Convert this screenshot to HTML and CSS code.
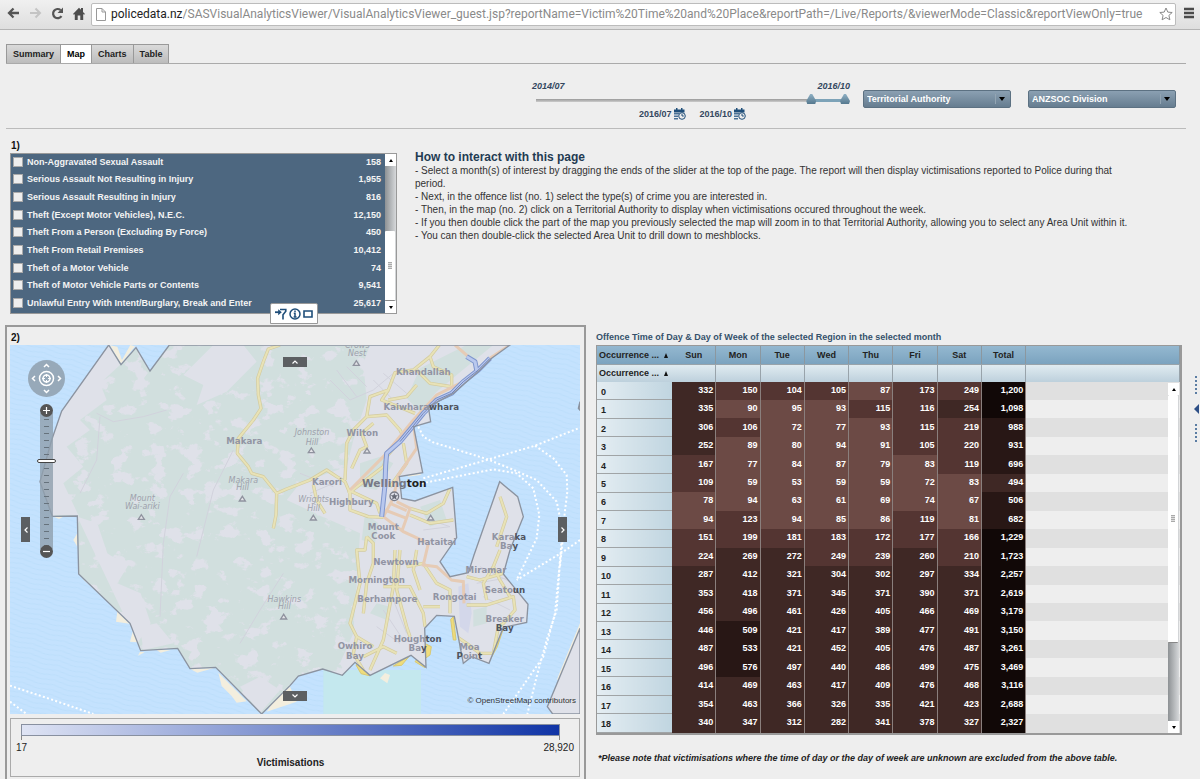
FILE: index.html
```html
<!DOCTYPE html>
<html lang="en">
<head>
<meta charset="utf-8">
<title>Victim Time and Place</title>
<link rel="stylesheet" href="styles.css">
</head>
<body>
<header class="browser">
  <nav class="browser-nav">
    <button class="icon-btn" aria-label="Back"><svg width="13" height="12" viewBox="0 0 13 12"><path d="M12 6H2M6.500 1.500L2 6l4.500 4.500" fill="none" stroke="#555" stroke-width="2.300"/></svg></button>
    <button class="icon-btn" aria-label="Forward"><svg width="13" height="12" viewBox="0 0 13 12"><path d="M1 6h10M6.500 1.500L11 6l-4.500 4.500" fill="none" stroke="#c4c4c4" stroke-width="2"/></svg></button>
    <button class="icon-btn" aria-label="Reload"><svg width="13" height="13" viewBox="0 0 13 13"><path d="M10.500 9.200A4.600 4.600 0 1 1 9.600 3" fill="none" stroke="#555" stroke-width="2.200"/><path d="M12 .5v5.500H6.500z" fill="#555"/></svg></button>
    <button class="icon-btn" aria-label="Home"><svg width="12" height="13" viewBox="0 0 12 13"><path d="M0 7L6 .8l2 2V1h2v4l2 2-1 .8-.8-.8V13H7.300V8.500H4.700V13H1.800V7L1 7.800z" fill="#4d4d4d"/></svg></button>
  </nav>
  <label class="address">
    <svg width="10" height="13" viewBox="0 0 10 13"><path d="M.5.5h5.500l3.500 3.500v8.500h-9zM6 .5v3.500h3.500" fill="#fff" stroke="#999"/></svg>
    <span class="domain">policedata.nz</span><input class="path" type="text" aria-label="Address" value="/SASVisualAnalyticsViewer/VisualAnalyticsViewer_guest.jsp?reportName=Victim%20Time%20and%20Place&amp;reportPath=/Live/Reports/&amp;viewerMode=Classic&amp;reportViewOnly=true">
    <svg width="14" height="14" viewBox="0 0 14 14"><path d="M7 1l1.800 4.100 4.400.4-3.300 2.900 1 4.400L7 10.500l-3.900 2.300 1-4.400L.8 5.500l4.400-.4z" fill="#fff" stroke="#888"/></svg>
  </label>
  <button class="icon-btn" aria-label="Menu"><svg width="10" height="12" viewBox="0 0 10 12"><path d="M0 2h10M0 6h10M0 10h10" stroke="#4a4a4a" stroke-width="2.400"/></svg></button>
</header>

<main class="report">
  <nav class="tabs">
    <button class="tab">Summary</button><button class="tab active">Map</button><button class="tab">Charts</button><button class="tab">Table</button>
  </nav>

  <section class="controls">
    <div class="period">
      <div class="ends"><span>2014/07</span><span>2016/10</span></div>
      <div class="range">
        <input type="range" min="0" max="27" value="24" aria-label="First month">
        <input type="range" min="0" max="27" value="27" aria-label="Last month">
      </div>
      <div class="picked">
        <button class="date">2016/07<svg class="cal" width="12" height="12" viewBox="0 0 12 12"><path d="M0 1.500h10.500v3H0zM2 0h1.500v2H2zM7 0h1.500v2H7z" fill="#1f4e79"/><path d="M0 5h5v1.500H0zM0 7.500h4V9H0zM0 10h4v1.500H0z" fill="#4a7297"/><circle cx="8" cy="8" r="3.300" fill="#eee" stroke="#1f4e79"/><path d="M8 6v2h1.800" fill="none" stroke="#1f4e79"/></svg></button>
        <button class="date">2016/10<svg class="cal" width="12" height="12" viewBox="0 0 12 12"><path d="M0 1.500h10.500v3H0zM2 0h1.500v2H2zM7 0h1.500v2H7z" fill="#1f4e79"/><path d="M0 5h5v1.500H0zM0 7.500h4V9H0zM0 10h4v1.500H0z" fill="#4a7297"/><circle cx="8" cy="8" r="3.300" fill="#eee" stroke="#1f4e79"/><path d="M8 6v2h1.800" fill="none" stroke="#1f4e79"/></svg></button>
      </div>
    </div>
    <div class="picker"><select aria-label="Territorial Authority"><option>Territorial Authority</option></select></div>
    <div class="picker"><select aria-label="ANZSOC Division"><option>ANZSOC Division</option></select></div>
  </section>

  <section class="top-row">
    <div class="offences">
      <h2 class="step">1)</h2>
      <div class="list">
        <ul class="items">
          <li><label><input type="checkbox"><span>Non-Aggravated Sexual Assault</span><b>158</b></label></li>
          <li><label><input type="checkbox"><span>Serious Assault Not Resulting in Injury</span><b>1,955</b></label></li>
          <li><label><input type="checkbox"><span>Serious Assault Resulting in Injury</span><b>816</b></label></li>
          <li><label><input type="checkbox"><span>Theft (Except Motor Vehicles), N.E.C.</span><b>12,150</b></label></li>
          <li><label><input type="checkbox"><span>Theft From a Person (Excluding By Force)</span><b>450</b></label></li>
          <li><label><input type="checkbox"><span>Theft From Retail Premises</span><b>10,412</b></label></li>
          <li><label><input type="checkbox"><span>Theft of a Motor Vehicle</span><b>74</b></label></li>
          <li><label><input type="checkbox"><span>Theft of Motor Vehicle Parts or Contents</span><b>9,541</b></label></li>
          <li><label><input type="checkbox"><span>Unlawful Entry With Intent/Burglary, Break and Enter</span><b>25,617</b></label></li>
        </ul>
        <div class="scroll"><button class="step-btn up" aria-label="Scroll up"></button><div class="rail list-rail"><i class="thumb"></i></div><button class="step-btn down" aria-label="Scroll down"></button></div>
      </div>
      <div class="tools">
        <button class="icon-btn" aria-label="Filter"><svg width="12" height="12" viewBox="0 0 12 12"><path d="M0 4.200h4" fill="none" stroke="#1f4e79" stroke-width="1.800"/><path d="M3.200 1.200L6.800 4.200 3.200 7.200z" fill="#1f4e79"/><path d="M5 1.500h5.800v1.800L8 6.800V11.500" fill="none" stroke="#1f4e79" stroke-width="1.600"/></svg></button>
        <button class="icon-btn" aria-label="Information"><svg width="12" height="12" viewBox="0 0 12 12"><circle cx="6" cy="6" r="5" fill="#fff" stroke="#1f4e79" stroke-width="1.500"/><path d="M6 2.500v1.500M4.800 5.300H6v3.200M4.600 8.900h3" fill="none" stroke="#1f4e79" stroke-width="1.500"/></svg></button>
        <button class="icon-btn" aria-label="Maximise"><svg width="10" height="8" viewBox="0 0 10 8"><path d="M1 1h8v6H1z" fill="#fff" stroke="#1f4e79" stroke-width="1.600"/></svg></button>
      </div>
    </div>
    <article class="howto">
      <h1>How to interact with this page</h1>
      <p>- Select a month(s) of interest by dragging the ends of the slider at the top of the page. The report will then display victimisations reported to Police during that period.</p>
      <p>- Next, in the offence list (no. 1) select the type(s) of crime you are interested in.</p>
      <p>- Then, in the map (no. 2) click on a Territorial Authority to display when victimisations occured throughout the week.</p>
      <p>- If you then double click the part of the map you previously selected the map will zoom in to that Territorial Authority, allowing you to select any Area Unit within it.</p>
      <p>- You can then double-click the selected Area Unit to drill down to meshblocks.</p>
    </article>
  </section>

  <section class="bottom-row">
    <div class="map-panel">
      <h2 class="step">2)</h2>
      <div class="map">
        <svg class="chart" viewBox="30 1035 1710 1107" role="img" aria-label="Map of Wellington">
          <defs>
            <pattern id="waves" width="90" height="30" patternUnits="userSpaceOnUse" patternTransform="rotate(14)">
              <path d="M0 8q22-7 45 0t45 0M0 23q22-6 45 0t45 0" fill="none" stroke="#bcdefb" stroke-width="3"/>
            </pattern>
            <clipPath id="land-clip"><use href="#land"/></clipPath>
            <filter id="terrain" x="0" y="0" width="1" height="1" color-interpolation-filters="sRGB">
              <feTurbulence type="fractalNoise" baseFrequency="0.018 0.024" numOctaves="5" seed="8"/>
              <feColorMatrix values="0 0 0 0 .875  0 0 0 0 .882  0 0 0 0 .914  14 0 0 0 -8"/>
            </filter>
            <path id="land" d="M326 1035L363 1094 408 1043 450 1113 508 1035H1530L1475 1075 1440 1110 1360 1180 1285 1220 1292 1265 1241 1280 1268 1418 1198 1430 1205 1495 1245 1503 1358 1462 1370 1613 1320 1685 1350 1730 1405 1718 1422 1665 1499 1445 1553 1490 1570 1550 1530 1650 1510 1722 1584 1813 1580 1867 1510 1882 1467 1990 1415 1970 1390 1990 1363 1849 1310 1846 1274 1885 1278 2002 1233 1966 1110 2026 1065 1987 1027 2026 968 2007 895 2028 870 2057 785 2142 647 2002 570 2006 533 1945 422 1952 390 1870 236 1722 232 1548 157 1549 120 1445 155 1320 185 1233Z"/>
            <path id="peak" d="M-9 6H9L0-8Z" fill="#e4e4e8" stroke="#8f929e" stroke-width="4"/>
          </defs>
          <rect x="30" y="1035" width="1710" height="1107" fill="#c4e2fe"/>
          <rect x="30" y="1035" width="1710" height="1107" fill="url(#waves)"/>
          <path d="M970 2010h293v132H970z" fill="#c4e8ee"/>
          <g fill="#f3eede">
            <path d="M330 1036l33 55 42-52 -14 -4 -25 45 -14-40z"/>
            <path d="M157 1549l20 8 16-8zM232 1600l-12 20 12 20zM245 1735l70 60 30 20-50-50zM352 1835l-4 30 40 6zM398 1895l-8 30 22 2zM420 1955l-6 12 20-10zM470 1950l12 8 30-8zM572 2008l20 10 50-14zM655 2018l10 40 30 30 15 20 30-4zM800 2135l20-30 50-45 20 45z"/>
            <path d="M1140 2035l15-16 15 6-8 25zM1230 1408l-15 10 10 12 40-6z"/>
            <path d="M1740 1870l-25 60-45 110 20-10 50-120z"/>
          </g>
          <path d="M1068 1995l15 26 25 6-30-35zM1180 1998l25-2 25-30zM1274 1930l20 10-4 25-14 10zM1360 1850l8 70-8 0-8-62zM1245 1985l30 18-20-30zM1467 1985l25-45 20-60-10 0-28 80z" fill="#efdc7c" stroke="#d9c974" stroke-width="3"/>
          <use href="#land" fill="#d1dfde"/>
          <g clip-path="url(#land-clip)">
            <path d="M150 1250L326 1035 360 1095 300 1150 320 1200 240 1260 270 1290 200 1340 250 1400 190 1450 235 1545H100zM232 1550l60 20 30 90 60 40-30 50 70 30 30 90-40 60zM640 1035l90 0 40 50-90 90-90 40 20-60-60-30zM420 1880l50-10 50 60-90 20zM720 2060l60-30 60 40-60 70z" fill="#dfe1e9"/>
            <rect x="30" y="1035" width="1180" height="1107" filter="url(#terrain)"/>
            <path d="M1110 1035L1090 1090 1100 1200 1060 1320 1040 1400 900 1450 860 1500 990 1560 1080 1600 1060 1900 1020 1990 1100 2142H1700V1035z" fill="#dfe1e9"/>
            <path d="M1400 1035h80l-110 90-60 50-50 60-40-40 40-90zM1080 1390l60-20 40 20-50 80-50-10zM1095 1540l40 30-10 60-40-10zM1260 1520l60-20 20 60-50 20zM1130 1810l40 10-10 40-50-20zM1420 1830l40-10 0 50-40 10z" fill="#d1dfde"/>
            <path d="M1375 1760l30-10 10 90 -10 60-25-20z" fill="#d3d7ea"/>
            <g fill="none" stroke="#d1d2dc" stroke-width="3">
              <path d="M290 1240l50 25 90-15 70-20M300 1250l-10 130-50 100M480 1850l10-220 20-140 40-70M720 1930l60-100 70-110M700 1350l-60 120-50 200M990 1140l60 60 70-30 60-50M1010 1110l60 80M1040 1100l60 60M1120 1140l60 60M1150 1120l70 60M900 1420l100 40M930 1480l70-30M1130 1880l70 50M1150 1830l60 90M1180 1800l40 100M1440 1700l100 50M1430 1750l110-20M1450 1790l80 40M1120 1690l80-5M1290 1560l60 20M1270 1590l80-10"/>
            </g>
            <g class="road">
              <path id="r1" d="M840 1035L805 1047 790 1085 773 1135 775 1185 783 1225 760 1260 715 1315 712 1360 745 1400 755 1420 790 1430 830 1480 828 1545 820 1585M830 1480L860 1467 930 1440 980 1410 1010 1430 1035 1445 1050 1480 1050 1530 1105 1550 1150 1552"/>
              <path id="r2" d="M1318 1035L1290 1070 1240 1110 1185 1118 1165 1170 1110 1190 1100 1250 1060 1290 1040 1330 1035 1440M1290 1070L1300 1100 1355 1125 1355 1160 1290 1150 1250 1110M1165 1200L1220 1190 1250 1155M1165 1170l-20 30 100 40M1100 1250L1160 1245 1200 1290 1210 1310 1160 1370 1150 1400 1045 1480"/>
              <path id="r3" d="M1055 1405L1080 1350 1100 1340 1085 1300 1120 1270M1045 1470L1130 1510 1140 1540M940 1455L950 1500 975 1540M1210 1330l10 60-50 70M1230 1525L1280 1540 1330 1510 1350 1465M1230 1545L1290 1570 1360 1560M1100 1610L1095 1650 1070 1650 1080 1750 1050 1870 1070 1910 1060 1960 1090 2010M1100 1610l20 20 0 60-20 60-10 90M1185 1650l-5 110-30 160-40 90M1200 1650l-10 120 30 110 10 30M1150 1760l80 0 40 80 5 40M1220 1700l50-10 40 60 40 20 0 70M1250 1650l-10 60 20 60M1090 1970l60-30 40 20M1270 1820l50 0M1070 1910l50 30"/>
              <path id="r4" d="M1400 1815L1460 1815 1540 1790 1545 1830 1510 1870 1495 1880 1480 1960 1440 1960 1400 1930 1370 1910M1400 1730L1440 1740 1510 1720M1500 1650L1480 1700 1450 1750 1460 1800M1530 1790l-30-50-20-40M1490 1640l30-90-20-60"/>
            </g>
            <g class="road-top"><use href="#r1"/><use href="#r2"/><use href="#r3"/><use href="#r4"/></g>
            <path d="M1365 1035L1405 1070M1530 1035L1470 1075M1390 1145L1310 1185 1240 1260 1150 1370 1050 1470M1242 1285L1250 1345 1195 1425 1180 1495 1150 1550M1150 1550L1210 1595 1275 1625M1190 1505L1230 1525 1205 1595M1155 1530L1220 1555M1170 1510l50 22M1285 1630L1270 1695 1310 1700 1355 1740 1390 1745 1392 1810" fill="none" stroke="#e6cbb5" stroke-width="9"/>
          </g>
          <g fill="none" stroke-linejoin="round">
            <path d="M1470 1075L1435 1110 1390 1145 1355 1180 1310 1200 1270 1240 1240 1277 1200 1325 1160 1360 1157 1395 1155 1455 1145 1550M1400 1070L1425 1085 1430 1110" stroke="#7f96ce" stroke-width="15"/>
            <path d="M1470 1075L1435 1110 1390 1145 1355 1180 1310 1200 1270 1240 1240 1277 1200 1325 1160 1360 1157 1395 1155 1455 1145 1550M1400 1070L1425 1085 1430 1110" stroke="#b9c8ee" stroke-width="9"/>
            <path d="M1470 1075L1435 1110 1390 1145 1355 1180 1310 1200 1270 1240 1240 1277 1200 1325" stroke="#7185bd" stroke-width="3"/>
          </g>
          <use href="#land" fill="none" stroke="#8b93a0" stroke-width="4"/>
          <path d="M1740 1885L1642 2120 1658 2142H1740zM1735 1225l5-20v26z" fill="#dfe1e9" stroke="#8b93a0" stroke-width="4"/>
          <g fill="none" stroke="#fff" stroke-width="6" stroke-dasharray="6 7">
            <path d="M1255 1280L1270 1310 1300 1327 1460 1377 1530 1405 1610 1440 1670 1505 1690 1600 1680 1700M1270 1435L1460 1380 1605 1337 1740 1283M1265 1450L1480 1408 1550 1420 1600 1465 1618 1545 1610 1615 1550 1740M1605 1337L1660 1375 1700 1425 1702 1475 1685 1615 1670 1830 1640 1920 1610 2030 1582 2142M1740 1620L1690 1655 1550 1740M1682 1660L1665 1840 1630 1970 1510 2142M30 2057L150 2097 280 2142M30 2105l50 37"/>
          </g>
          <g class="hill">
            <text x="730" y="1449">Makara</text><text x="728" y="1471">Hill</text>
            <text x="427" y="1504">Mount</text><text x="427" y="1526">Wai-ariki</text>
            <text x="1072" y="1045">Crows</text><text x="1071" y="1069">Nest</text>
            <text x="936" y="1306">Johnston</text><text x="936" y="1335">Hill</text>
            <text x="941" y="1507">Wrights</text><text x="941" y="1532">Hill</text>
            <text x="853" y="1805">Hawkins</text><text x="853" y="1828">Hill</text>
          </g>
          <use href="#peak" x="727" y="1497"/><use href="#peak" x="424" y="1552"/><use href="#peak" x="1069" y="1090"/><use href="#peak" x="934" y="1352"/><use href="#peak" x="1101" y="1353"/><use href="#peak" x="940" y="1554"/><use href="#peak" x="1292" y="1554"/><use href="#peak" x="851" y="1851"/>
          <g class="place">
            <text x="733" y="1331">Makara</text>
            <text x="1270" y="1125">Khandallah</text>
            <text x="1264" y="1229">Kaiwhara<tspan class="sea">whara</tspan></text>
            <text x="1087" y="1308">Wilton</text>
            <text x="981" y="1456">Karori</text>
            <text x="1054" y="1515">Highbury</text>
            <text x="1150" y="1589">Mount</text><text x="1150" y="1617">Cook</text>
            <text x="1310" y="1636">Hataitai</text>
            <text x="1527" y="1621">Kara<tspan class="sea">ka</tspan></text><text x="1527" y="1648">Ba<tspan class="sea">y</tspan></text>
            <text x="1188" y="1695">Newtown</text>
            <text x="1130" y="1750">Mornington</text>
            <text x="1162" y="1807">Berhampore</text>
            <text x="1364" y="1800">Rongotai</text>
            <text x="1458" y="1718">Miramar</text>
            <text x="1515" y="1780">Seato<tspan class="sea">un</tspan></text>
            <text x="1514" y="1865">Breaker</text><text x="1514" y="1892"><tspan class="sea">Bay</tspan></text>
            <text x="1253" y="1926">Hough<tspan class="sea">ton</tspan></text><text x="1253" y="1953">Ba<tspan class="sea">y</tspan></text>
            <text x="1065" y="1948">Owhiro</text><text x="1065" y="1977">Bay</text>
            <text x="1408" y="1949">Moa</text><text x="1408" y="1977"><tspan class="sea">P</tspan>oin<tspan class="sea">t</tspan></text>
            <text class="city" x="1183" y="1461">Welling<tspan class="capital">ton</tspan></text>
          </g>
          <circle cx="1183" cy="1489" r="13" fill="#dfe1e9" stroke="#777a86" stroke-width="4"/>
          <path d="M1183 1479l3 7 8 0-6 5 2 8-7-4-7 4 2-8-6-5 8 0z" fill="#666a76"/>
          <text class="credit" x="1728" y="2110">© OpenStreetMap contributors</text>
        </svg>
        <div class="wheel">
          <svg width="37" height="37" viewBox="0 0 37 37"><circle cx="18.500" cy="18.500" r="18.500" fill="#8f9fad" fill-opacity=".85"/><g fill="none" stroke="#fff" stroke-width="1.500"><path d="M16 7l2.500-2.500L21 7M16 30l2.500 2.500L21 30M7 16l-2.500 2.500L7 21M30 16l2.500 2.500L30 21"/><circle cx="18.500" cy="18.500" r="7"/><circle cx="18.500" cy="18.500" r="3.500"/><path d="M18.500 14v3M18.500 20v3M14 18.500h3M20 18.500h3" stroke-width="1"/></g></svg>
        </div>
        <div class="zoom">
          <button class="round" aria-label="Zoom in"><svg width="13" height="13" viewBox="0 0 13 13"><path d="M3 6.500h7M6.500 3v7" stroke="#fff" stroke-width="1.200"/></svg></button>
          <input type="range" min="0" max="100" value="65" aria-label="Zoom level">
          <button class="round" aria-label="Zoom out"><svg width="13" height="13" viewBox="0 0 13 13"><path d="M3 6.500h7" stroke="#fff" stroke-width="1.200"/></svg></button>
        </div>
        <button class="pan north" aria-label="Pan north"><svg width="8" height="6" viewBox="0 0 8 6"><path d="M1.500 4.500L4 2l2.500 2.500"/></svg></button>
        <button class="pan south" aria-label="Pan south"><svg width="8" height="6" viewBox="0 0 8 6"><path d="M1.500 1.500L4 4l2.500-2.500"/></svg></button>
        <button class="pan west" aria-label="Pan west"><svg width="6" height="8" viewBox="0 0 6 8"><path d="M4.500 1.500L2 4l2.500 2.500"/></svg></button>
        <button class="pan east" aria-label="Pan east"><svg width="6" height="8" viewBox="0 0 6 8"><path d="M1.500 1.500L4 4 1.500 6.500"/></svg></button>
      </div>
      <div class="legend">
        <div class="ramp"></div>
        <div class="ticks"></div>
        <div class="ramp-ends"><span>17</span><span>28,920</span></div>
        <div class="ramp-title">Victimisations</div>
      </div>
    </div>

    <div class="table-panel">
      <h2 class="table-title">Offence Time of Day &amp; Day of Week of the selected Region in the selected month</h2>
      <div class="grid">
        <table>
          <colgroup><col class="hour-col"><col class="day-col" span="8"><col></colgroup>
          <thead>
            <tr class="days"><th class="corner" scope="col">Occurrence ... <i class="sort"></i></th><th scope="col">Sun</th><th scope="col">Mon</th><th scope="col">Tue</th><th scope="col">Wed</th><th scope="col">Thu</th><th scope="col">Fri</th><th scope="col">Sat</th><th scope="col">Total</th><td></td></tr>
            <tr class="sub"><th class="corner" scope="col">Occurrence ... <i class="sort"></i></th><td></td><td></td><td></td><td></td><td></td><td></td><td></td><td></td><td></td></tr>
          </thead>
          <tbody id="hours"></tbody>
        </table>
        <div class="scroll grid-scroll"><button class="step-btn up" aria-label="Scroll up"></button><div class="rail grid-rail"><i class="thumb"></i></div><button class="step-btn down" aria-label="Scroll down"></button></div>
      </div>
      <p class="note">*Please note that victimisations where the time of day or the day of week are unknown are excluded from the above table.</p>
    </div>
    <button class="drawer" aria-label="Open side panel"><i class="dots"></i><i class="caret"></i><i class="dots"></i></button>
  </section>
</main>
<script src="app.js"></script>
</body>
</html>
```
FILE: app.js
```js
// Victimisations per hour: Sun..Sat, Total
const hours = [
  [332, 150, 104, 105, 87, 173, 249, 1200],
  [335, 90, 95, 93, 115, 116, 254, 1098],
  [306, 106, 72, 77, 93, 115, 219, 988],
  [252, 89, 80, 94, 91, 105, 220, 931],
  [167, 77, 84, 87, 79, 83, 119, 696],
  [109, 59, 53, 59, 59, 72, 83, 494],
  [78, 94, 63, 61, 69, 74, 67, 506],
  [94, 123, 94, 85, 86, 119, 81, 682],
  [151, 199, 181, 183, 172, 177, 166, 1229],
  [224, 269, 272, 249, 239, 260, 210, 1723],
  [287, 412, 321, 304, 302, 297, 334, 2257],
  [353, 418, 371, 345, 371, 390, 371, 2619],
  [456, 496, 461, 426, 405, 466, 469, 3179],
  [446, 509, 421, 417, 389, 477, 491, 3150],
  [487, 533, 421, 452, 405, 476, 487, 3261],
  [496, 576, 497, 440, 486, 499, 475, 3469],
  [414, 469, 463, 417, 409, 476, 468, 3116],
  [354, 463, 366, 326, 335, 421, 423, 2688],
  [340, 347, 312, 282, 341, 378, 327, 2327]
];
const limits = [100, 250, 500, 1000];
const body = document.getElementById("hours");

hours.forEach((counts, hour) => {
  const row = body.insertRow();
  const head = document.createElement("th");
  head.scope = "row";
  head.textContent = hour;
  row.append(head);
  counts.forEach(count => {
    const cell = row.insertCell();
    cell.className = "heat-" + limits.filter(limit => count >= limit).length;
    cell.textContent = count.toLocaleString("en-US");
  });
  row.insertCell().className = "rest";
});
```
FILE: styles.css
```css
* { box-sizing: border-box; }
body { margin: 0; background: #eee; color: #222; font: 10px/12px "Liberation Sans", Arial, sans-serif; overflow-x: hidden; }
button { border: 0; padding: 0; background: none; font: inherit; color: inherit; }
h1, h2, p, ul { margin: 0; padding: 0; }
svg { display: block; flex: none; }

.browser { display: flex; align-items: center; gap: 8px; height: 30px; padding: 0 6px 3px 7px; background: linear-gradient(#f0f0f0, #dedede); border-bottom: 1px solid #b4b4b4; }
.browser-nav { display: flex; gap: 9px; margin-right: -2px; }
.address { flex: 1; display: flex; align-items: center; height: 23px; margin-top: 2px; padding: 0 2px 0 4px; background: #fff; border: 1px solid #bcbcbc; border-radius: 2px; font: 12px/16px Roboto, "Open Sans", sans-serif; color: #222; }
.domain { margin-left: 5px; }
.path { flex: 1; min-width: 0; border: 0; padding: 0; background: none; font: inherit; color: #8a8a8a; outline: 0; }

.report { padding: 14px 14px 0 6px; }
.tabs { display: flex; border-bottom: 1px solid #aaa; height: 20px; font-weight: bold; }
.tab { padding: 0 6px; border: 1px solid #999; border-width: 1px 1px 0 0; background: linear-gradient(#dadada, #bcbcbc); font-size: 9px; }
.tab:first-child { border-left-width: 1px; }
.tab.active { background: #fff; color: #000; }

.controls { display: flex; justify-content: flex-end; align-items: flex-start; gap: 17px; height: 65px; padding: 16px 10px 0 0; border-bottom: 1px solid #bbb; font-size: 9px; font-weight: bold; }
.period { width: 318px; margin-right: -4px; color: #33475f; }
.ends { display: flex; justify-content: space-between; font-style: italic; }
.range { position: relative; height: 10px; margin: 2px 0 4px 4px; background: linear-gradient(90deg, transparent 276px, #7da3b8 276px, #7da3b8 310px, transparent 310px) 0 5px / 100% 3px no-repeat, linear-gradient(#999, #ccc) 0 5px / 312px 3px no-repeat; }
.range input { position: absolute; inset: 0; width: 100%; height: 10px; margin: 0; appearance: none; background: none; pointer-events: none; }
.range input::-webkit-slider-thumb { appearance: none; width: 10px; height: 10px; background: linear-gradient(#8fb0c4, #55788e); clip-path: polygon(40% 0, 60% 0, 100% 70%, 90% 100%, 10% 100%, 0 70%); }
.picked { display: flex; gap: 14px; padding-left: 107px; }
.date { display: flex; align-items: center; gap: 2px; }
.picker { position: relative; width: 148px; margin-top: 10px; }
.picker select { width: 100%; height: 18px; padding: 0 3px; appearance: none; border: 1px solid #5c7182; border-radius: 2px; background: linear-gradient(#8ba0b2, #667d90); color: #fff; font: inherit; }
.picker::after { content: ""; position: absolute; right: 6px; top: 7px; border: 3px solid transparent; border-top: 4px solid #000; border-bottom: 0; }
.picker::before { content: ""; position: absolute; right: 15px; top: 4px; width: 1px; height: 10px; background: #93a5b3; }

.top-row { display: grid; grid-template-columns: minmax(0, 387fr) minmax(0, 762fr); gap: 18px; padding: 10px 9px 0 4px; }
.step { height: 14px; padding-left: 1px; font-size: 10px; line-height: 14px; color: #111; }
.offences { position: relative; }
.list { display: flex; height: 161px; background: #4d6780; border: 1px solid #999; }
.items { flex: 1; display: grid; grid-auto-rows: 1fr; list-style: none; color: #f4f4f4; font-size: 9px; font-weight: bold; }
.items label { display: flex; align-items: center; height: 100%; padding: 0 4px 2px 2px; }
.items input { appearance: none; width: 10px; height: 10px; margin: 0 4px 0 0; background: #eee; border: 1px solid #aaa; }
.items b { margin-left: auto; }
.scroll { display: flex; flex-direction: column; width: 11px; background: #c4c6c8; }
.step-btn { height: 12px; background: #fff; display: grid; place-items: center; }
.step-btn::after { content: ""; border: 2px solid transparent; }
.up::after { border-bottom: 3px solid #000; border-top: 0; }
.down::after { border-top: 3px solid #000; border-bottom: 0; }
.rail { flex: 1; display: flex; flex-direction: column; background: linear-gradient(90deg, #8d9194, #d6d8da); }
.thumb { width: 10px; background: #fff; border-radius: 1px; border-bottom: 1px solid #888; display: grid; place-items: center; }
.thumb::after { content: ""; width: 4px; height: 7px; background: repeating-linear-gradient(#aaa 0 1px, #ddd 1px 2px); }
.list-rail { justify-content: flex-end; }
.list-rail .thumb { height: 52%; }
.tools { position: absolute; left: 260px; bottom: -10px; display: flex; align-items: center; gap: 2px; height: 21px; padding: 0 4px; background: #fff; border: 1px solid #999; border-radius: 2px 2px 0 0; z-index: 2; }
.howto { padding: 11px 38px 0 0; font-size: 10px; line-height: 13px; color: #333; }
.howto h1 { font-size: 12px; line-height: 14px; color: #1f3b52; }

.bottom-row { display: grid; grid-template-columns: minmax(0, 581fr) minmax(0, 586fr) 8px; column-gap: 10px; padding-top: 11px; margin: 0 -14px 0 -1px; }
.map-panel { padding: 4px 4px 4px 3px; border: 2px solid #999; }
.map { position: relative; }
.chart { width: 100%; height: auto; }
.chart text { text-anchor: middle; }
.place { font: bold 26px "DejaVu Sans", sans-serif; fill: #9194a3; }
.hill { font: italic 24px "DejaVu Sans", sans-serif; fill: #9ea1ac; }
.place .city { font-size: 32px; fill: #777985; }
.sea { fill: #50545e; }
.capital { fill: #222; }
.chart .credit { font: 24px "Liberation Sans", sans-serif; fill: #333; text-anchor: end; }
.road, .road-top { fill: none; stroke-linejoin: round; }
.road { stroke: #d3cb9f; stroke-width: 10px; }
.road-top { stroke: #e8e2b6; stroke-width: 6px; }
.wheel { position: absolute; left: 18px; top: 15px; }
.zoom { position: absolute; left: 27px; top: 59px; width: 19px; display: flex; flex-direction: column; align-items: center; }
.round { border-radius: 50%; background: #555; z-index: 1; }
.zoom input { appearance: none; writing-mode: vertical-lr; direction: rtl; width: 19px; height: 136px; margin: -4px 0; background: repeating-linear-gradient(transparent 0 6px, #66727c 6px 7px) center / 5px 100% no-repeat, linear-gradient(#8f9fadcc, #8f9fadcc) center / 13px 100% no-repeat; }
.zoom input::-webkit-slider-thumb { appearance: none; width: 19px; height: 4px; background: #fff; border: 1px solid #444; border-radius: 2px; }
.pan { position: absolute; display: grid; place-items: center; background: #5c5f62; }
.pan path { fill: none; stroke: #fff; stroke-width: 1.200px; }
.north, .south { left: 273px; width: 24px; height: 10px; }
.north { top: 12px; }
.south { bottom: 13px; }
.west, .east { top: 172px; width: 9px; height: 25px; }
.west { left: 11px; }
.east { right: 13px; }
.legend { margin-top: 4px; padding: 5px 19px 7px 10px; border: 1px solid #aaa; }
.ramp { height: 12px; background: linear-gradient(90deg, #dfe4f4, #1034a6); border: 1px solid #8890a0; }
.ticks { height: 4px; border: 1px solid #888; border-width: 0 1px; }
.ramp-ends { display: flex; justify-content: space-between; margin: 0 -14px 0 -5px; padding-top: 2px; font-size: 10px; }
.ramp-title { padding-top: 3px; text-align: center; font-weight: bold; font-size: 10px; }

.table-panel { padding-top: 6px; }
.table-title { height: 14px; font-size: 9px; line-height: 12px; color: #34516b; }
.grid { position: relative; border: 1px solid #999; border-right: 2px solid #999; border-bottom: 2px solid #999; }
table { width: 100%; height: 387px; table-layout: fixed; border-collapse: collapse; font-size: 9px; line-height: 12px; font-weight: bold; }
.hour-col { width: 12.800%; }
.day-col { width: 7.600%; }
th, td { padding: 0; }
thead tr { height: 18px; }
.days { background: linear-gradient(#94b8d0, #7ba3bf); }
.days th, .days td { border-right: 1px solid #8b979f; border-bottom: 1px solid #98a3aa; }
.sub { background: linear-gradient(#e2edf2, #bdd0dc); }
.sub th, .sub td { border-right: 1px solid #98a3aa; }
thead .corner { padding-left: 2px; border-right-color: transparent; text-align: left; white-space: nowrap; font-size: 9px; }
.sort { display: inline-block; margin-left: 2px; border: 2px solid transparent; border-bottom: 5px solid #111; border-top: 0; }
tbody th { padding: 2px 0 0 4px; text-align: left; background: linear-gradient(90deg, #e4edf2, #c0d5e0); border-bottom: 1px solid #a0a4a6; }
tbody td { padding: 0 2px 2px 0; text-align: right; color: #fff; border-right: 1px solid #8a7f7d; }
.heat-0 { background: #6c4a45; }
.heat-1 { background: #543532; }
.heat-2 { background: #3f2825; }
.heat-3 { background: #281715; }
.heat-4 { background: #110807; }
tbody .rest { background: #eee; border-right: 0; }
tbody tr:nth-child(odd) .rest { background: #e0e0e0; }
.grid-scroll { position: absolute; right: 1px; top: 37px; bottom: 0; }
.grid-rail .thumb { height: 76%; }
.note { padding-top: 17px; padding-left: 2px; font-size: 9px; font-weight: bold; font-style: italic; }
.drawer { display: flex; flex-direction: column; align-items: center; align-self: start; gap: 10px; margin-top: 51px; }
.dots { width: 2px; height: 18px; background: repeating-linear-gradient(#5b7da3 0 2px, transparent 2px 4px); }
.caret { border: 5px solid transparent; border-right: 5px solid #2d4f86; border-left: 0; }
```
